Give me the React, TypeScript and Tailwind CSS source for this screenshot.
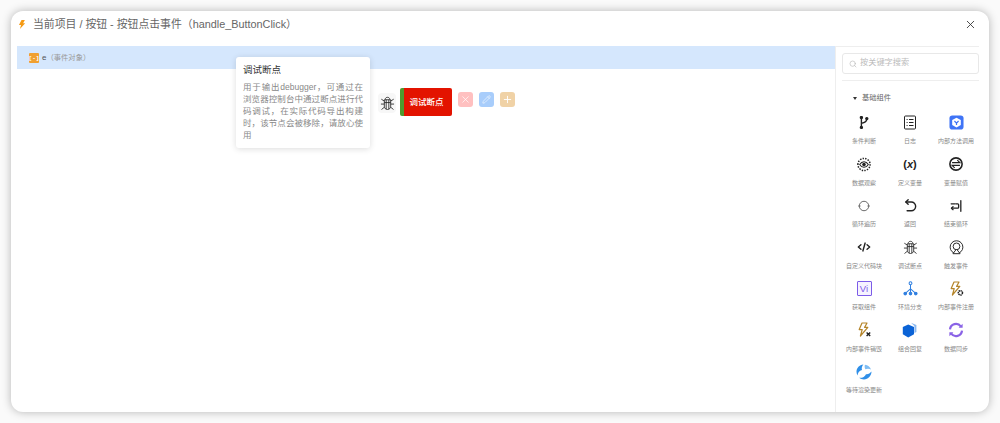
import React from 'react';
import { Search, X, Pencil, Plus } from 'lucide-react';

const Bug = ({ size = 15 }: { size?: number }) => (
  <svg width={size} height={size} viewBox="0 0 16 16" fill="none" stroke="#222" strokeWidth="0.9">
    <path d="M5.6 3.6C5.6 2.2 6.7 1.4 8 1.4s2.4.8 2.4 2.2" />
    <path d="M4.6 4h6.8v7c0 2-1.5 3.4-3.4 3.4S4.6 13 4.6 11V4z" />
    <path d="M6.6 4v10M9.4 4v10M4.6 7h6.8" />
    <path d="M1.4 3.4L4.6 5.4M14.6 3.4l-3.2 2M1 8.6h3.6M15 8.6h-3.6M1.6 14.4l3.2-2.6M14.4 14.4l-3.2-2.6" />
  </svg>
);

const stroke = { fill: 'none', stroke: '#222', strokeWidth: 1.5, strokeLinecap: 'round', strokeLinejoin: 'round' } as const;

const Bolt = () => (
  <path d="M6 1h5L8.6 5.4h3.2L4.4 14l1.8-6.4H3.2z" stroke="#b5852a" strokeWidth="1.2" strokeLinejoin="round" />
);

const icons: { label: string; icon: React.ReactNode }[] = [
  {
    label: '条件判断',
    icon: (
      <svg width="12" height="13" viewBox="0 0 12 13" {...stroke} strokeWidth={1.4}>
        <path d="M3.4 2v9.4M8.8 3C8.8 5.4 7 6.6 3.4 7.4" />
        <circle cx="3.4" cy="1.6" r="1" fill="#222" />
        <circle cx="8.8" cy="2.6" r="1" fill="#222" />
        <circle cx="3.4" cy="11.4" r="1" fill="#222" />
      </svg>
    ),
  },
  {
    label: '日志',
    icon: (
      <svg width="14" height="15" viewBox="0 0 14 15" fill="none" stroke="#222" strokeWidth="1">
        <rect x="1.5" y="1" width="11" height="13" rx="1" />
        <path d="M3.6 4.5h1M6 4.5h4.5M3.6 7.5h1M6 7.5h4.5M3.6 10.5h1M6 10.5h4.5" strokeWidth="1.1" />
      </svg>
    ),
  },
  {
    label: '内部方法调用',
    icon: (
      <svg width="15" height="15" viewBox="0 0 16 16">
        <rect x="0.5" y="0.5" width="15" height="15" rx="3" fill="#3f74f6" />
        <path d="M8 2.8l4.6 2.6v5.2L8 13.2l-4.6-2.6V5.4z" fill="#fff" />
        <path d="M5.8 6.4L8 8.6l2.2-2.2M8 8.6v2" fill="none" stroke="#3f74f6" strokeWidth="1.3" />
      </svg>
    ),
  },
  {
    label: '数据观察',
    icon: (
      <svg width="16" height="15" viewBox="0 0 16 16" fill="none" stroke="#222">
        <path d="M1.5 8a6.5 6.5 0 1 1 13 0a6.5 6.5 0 1 1-13 0" strokeDasharray="1.5 1.3" strokeWidth="1.6" />
        <path d="M3.4 8C4.6 6 6.2 5 8 5s3.4 1 4.6 3c-1.2 2-2.8 3-4.6 3S4.6 10 3.4 8z" strokeWidth="1.1" />
        <circle cx="8" cy="8" r="1.9" fill="#222" stroke="none" />
      </svg>
    ),
  },
  {
    label: '定义变量',
    icon: (
      <span className="whitespace-nowrap text-[11px] font-bold leading-4 text-[#222]">
        (<span className="italic">x</span>)
      </span>
    ),
  },
  {
    label: '变量赋值',
    icon: (
      <svg width="14" height="14" viewBox="0 0 16 16" fill="none" stroke="#222" strokeWidth="1.8">
        <circle cx="8" cy="8" r="7" />
        <path d="M3.5 6.5h9L9.5 3.5M12.5 9.5h-9l3 3" strokeWidth="1.3" />
      </svg>
    ),
  },
  {
    label: '循环遍历',
    icon: (
      <svg width="14" height="14" viewBox="0 0 16 16" fill="none" stroke="#444" strokeWidth="0.9">
        <circle cx="8" cy="8" r="5.4" />
        <path d="M1.2 8h3M11.8 8h3" stroke="#666" strokeWidth="0.9" />
      </svg>
    ),
  },
  {
    label: '返回',
    icon: (
      <svg width="15" height="15" viewBox="0 0 16 16" {...stroke}>
        <path d="M5.5 1.8L3 4.2l2.5 2.4" />
        <path d="M3.2 4.2h5.6a3.9 3.9 0 0 1 0 9.4H4.4" />
      </svg>
    ),
  },
  {
    label: '结束循环',
    icon: (
      <svg width="14" height="14" viewBox="0 0 16 16" {...stroke}>
        <path d="M13.5 2v12" />
        <path d="M2.5 5.5h7.5a1 1 0 0 1 1 1v3a1 1 0 0 1-1 1H3" strokeDasharray="4 1.2 30" />
        <path d="M4.6 8.8L2.8 10.5l1.8 1.7" />
      </svg>
    ),
  },
  {
    label: '自定义代码块',
    icon: (
      <svg width="14" height="14" viewBox="0 0 16 16" {...stroke} strokeWidth={1.6}>
        <path d="M4.5 5.5L1.5 8l3 2.5M11.5 5.5l3 2.5-3 2.5M9.3 3.5L6.7 12.5" />
      </svg>
    ),
  },
  { label: '调试断点', icon: <Bug /> },
  {
    label: '触发事件',
    icon: (
      <svg width="15" height="15" viewBox="0 0 16 16" fill="none" stroke="#222" strokeWidth="1">
        <circle cx="8" cy="7.6" r="6.8" />
        <circle cx="8" cy="6.8" r="3.6" />
        <path d="M8 9.6L4.2 14.6h7.6z" fill="#fff" />
      </svg>
    ),
  },
  {
    label: '获取组件',
    icon: (
      <span className="flex h-[15px] w-[15px] shrink-0 items-center justify-center rounded-[1px] border-[1.5px] border-[#7c5ce8] bg-[#f6f3ff] text-[9.5px] font-medium leading-none text-[#7c5ce8]">
        Vi
      </span>
    ),
  },
  {
    label: '环境分支',
    icon: (
      <svg width="15" height="15" viewBox="0 0 16 16" fill="none" stroke="#2f7fe0" strokeWidth="1.1">
        <circle cx="8" cy="2.4" r="1.5" />
        <path d="M8 4v8M8 8.4L3 12.6M8 8.4l5 4.2" />
        <circle cx="2.4" cy="13.4" r="1.4" fill="#2f7fe0" />
        <circle cx="8" cy="13.4" r="1.4" fill="#2f7fe0" />
        <circle cx="13.6" cy="13.4" r="1.4" fill="#2f7fe0" />
      </svg>
    ),
  },
  {
    label: '内部事件注册',
    icon: (
      <svg width="16" height="16" viewBox="0 0 16 16" fill="none">
        <Bolt />
        <circle cx="12.4" cy="11.8" r="2.1" stroke="#222" strokeWidth="1.5" strokeDasharray="1.3 0.5" />
      </svg>
    ),
  },
  {
    label: '内部事件销毁',
    icon: (
      <svg width="16" height="16" viewBox="0 0 16 16" fill="none">
        <Bolt />
        <path d="M10.6 10.4l3.6 3.6M14.2 10.4l-3.6 3.6" stroke="#222" strokeWidth="1.4" />
      </svg>
    ),
  },
  {
    label: '组合回复',
    icon: (
      <svg width="16" height="16" viewBox="0 0 16 16">
        <path d="M9 .8l5.4 2.2v7l-2 1V4z" fill="#8ab8f0" />
        <path d="M6.2 2.4L12 5v7.2l-5.8 3.2L.8 12.2V5z" fill="#0b63d6" />
      </svg>
    ),
  },
  {
    label: '数据同步',
    icon: (
      <svg width="16" height="16" viewBox="0 0 16 16" fill="none" stroke="#8a63e6" strokeWidth="2.2">
        <path d="M2 7.4A6 6 0 0 1 12.8 4.4" />
        <path d="M14 8.6A6 6 0 0 1 3.2 11.6" />
        <path d="M14.6 1.8v4h-4z" fill="#8a63e6" stroke="none" />
        <path d="M1.4 14.2v-4h4z" fill="#8a63e6" stroke="none" />
      </svg>
    ),
  },
  {
    label: '等待渲染更新',
    icon: (
      <svg width="16" height="16" viewBox="0 0 16 16">
        <path d="M7.4.5C3.4.8.5 4 .5 7.8c0 1.4.4 2.7 1.1 3.8 0-2.8 1.6-4.8 4.4-5.6C5.4 4.2 5.9 2 7.4.5z" fill="#2f8fe8" />
        <path d="M9 .7c2.8.3 5.2 2.2 6 4.8-1.8-1-3.8-1.1-5.6-.2C8.6 3.8 8.4 2 9 .7z" fill="#7fbdf3" />
        <path d="M15.5 7.6c0 4.2-3.4 7.9-7.5 7.9-1.9 0-3.5-.6-4.8-1.7 3.2.3 5.6-1 6.8-3.6 2.1.3 4-.7 5.5-2.6z" fill="#2f8fe8" />
      </svg>
    ),
  },
];

export default function App() {
  return (
    <div className="h-[423px] w-[1000px] overflow-hidden bg-[#fafafa] p-[11px] font-['Liberation_Sans','Noto_Sans_CJK_SC',sans-serif]">
      <div className="flex h-[401px] flex-col rounded-xl bg-white shadow-[0_0_10px_rgba(0,0,0,0.28)]">
        <div className="flex h-[35px] items-center pb-[9px] pl-[7px] pr-[12px]">
          <svg width="8" height="11" viewBox="0 0 10 12" className="mr-[7px]">
            <path d="M4.4.5h4.2L6.4 4.4h2.6L2.4 11.6l1.4-5H1.2z" fill="#f59a14" />
          </svg>
          <span className="text-[10.85px] text-[#666]">当前项目 / 按钮 - 按钮点击事件（handle_ButtonClick）</span>
          <X className="ml-auto h-[13px] w-[13px] text-[#333]" strokeWidth={1.6} />
        </div>
        <div className="flex min-h-0 flex-1">
          <div className="relative flex-1 pl-[6px]">
            <div className="flex h-[23px] items-center bg-[#d5e7fd] pl-[12px] pt-px">
              <span className="mr-[3px] flex h-[10px] w-[10px] items-center justify-center rounded-[1px] bg-[#f0a030] font-['Liberation_Mono',monospace] text-[6px] font-bold text-white">
                {'[-]'}
              </span>
              <span className="text-[8px] text-[#555]">e</span>
              <span className="text-[7.3px] text-[#999]">（事件对象）</span>
            </div>
            <div className="flex items-center pl-[361px] pt-[19px]">
              <div className="mr-[4px] mt-[2px] flex h-[20px] w-[18px] items-center justify-center rounded bg-[#f7f7f7]">
                <Bug />
              </div>
              <div className="flex h-[28px] w-[52px] items-center justify-center rounded-[2px] border-l-[4px] border-[#4e9a2e] bg-[#e31300] pr-[3px] text-[8.5px] font-medium text-white">
                调试断点
              </div>
              <div className="mb-[5px] ml-[6px] flex h-[15px] w-[15px] items-center justify-center rounded-[3px] bg-[#ffc0c0]">
                <X className="h-[11px] w-[11px] text-white" strokeWidth={1.5} />
              </div>
              <div className="mb-[5px] ml-[6px] flex h-[15px] w-[15px] items-center justify-center rounded-[3px] bg-[#a8cdfb]">
                <Pencil className="h-[9px] w-[9px] text-white" strokeWidth={1.5} />
              </div>
              <div className="mb-[5px] ml-[6px] flex h-[15px] w-[15px] items-center justify-center rounded-[3px] bg-[#f0d2a6]">
                <Plus className="h-[11px] w-[11px] text-white" strokeWidth={2} />
              </div>
            </div>
            <div className="absolute left-[225px] top-[11px] w-[134px] rounded-[3px] bg-white px-[7px] pb-[7px] pt-[6px] shadow-[0_1px_6px_rgba(0,0,0,0.14)]">
              <div className="mb-[4px] text-[9.5px] leading-[14px] text-[#333]">调试断点</div>
              <div className="text-justify text-[8.5px] leading-[12px] text-[#888]">
                用于输出debugger，可通过在浏览器控制台中通过断点进行代码调试，在实际代码导出构建时，该节点会被移除，请放心使用
              </div>
            </div>
          </div>
          <div className="w-[154px] border-l border-[#eeeeee] pr-[10px]">
            <div className="border-t border-[#eeeeee] pl-[6px] pt-[6px]">
              <div className="flex h-[21px] items-center rounded-[3px] border border-[#e8e8e8] pl-[6px] text-[8.2px] text-[#bbbbbb]">
                <Search className="mr-[3px] h-[8px] w-[8px] text-[#bbb]" />
                按关键字搜索
              </div>
              <div className="mt-[6px] border-t border-[#eeeeee] pt-[11px]">
                <div className="flex items-center pl-[11px] text-[7.25px] leading-[12px] text-[#666]">
                  <span className="mr-[5px] h-0 w-0 border-x-[2.5px] border-t-[3px] border-x-transparent border-t-[#333]" />
                  基础组件
                </div>
                <div className="ml-[-1px] mt-[10.5px] grid auto-rows-[41.5px] grid-cols-3">
                  {icons.map((item) => (
                    <div key={item.label} className="flex flex-col items-center">
                      <div className="flex h-[16px] w-[16px] items-center justify-center">{item.icon}</div>
                      <div className="mt-[5.5px] whitespace-nowrap text-[6px] leading-[10px] text-[#888]">{item.label}</div>
                    </div>
                  ))}
                </div>
              </div>
            </div>
          </div>
        </div>
      </div>
    </div>
  );
}
